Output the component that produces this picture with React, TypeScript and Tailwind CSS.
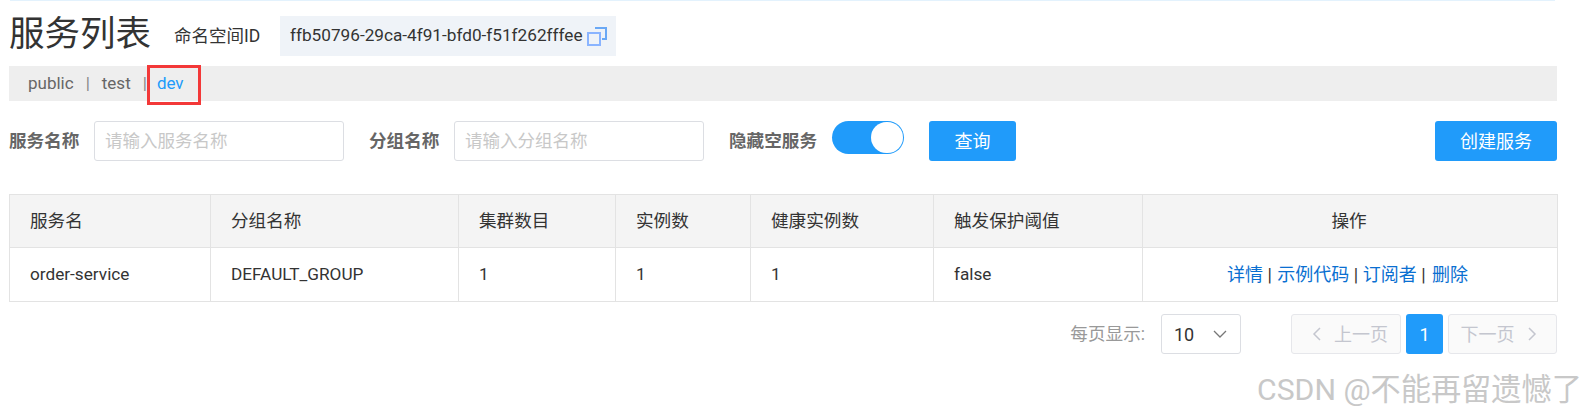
import React from "react";

const cols = ["w-[201px]", "w-[248px]", "w-[157px]", "w-[135px]", "w-[183px]", "w-[209px]", "w-[415px]"];
const heads = ["服务名", "分组名称", "集群数目", "实例数", "健康实例数", "触发保护阈值"];
const cells = ["order-service", "DEFAULT_GROUP", "1", "1", "1", "false"];

function Copy() {
  return (
    <svg width="20" height="20" viewBox="0 0 20 20" fill="none" className="ml-[4px] shrink-0">
      <rect x="1" y="7" width="12" height="12" stroke="#8ab4ff" strokeWidth="2" />
      <path d="M8 2H19V13H15" stroke="#6aa8f5" strokeWidth="2" />
    </svg>
  );
}

export default function App() {
  return (
    <div className="relative w-[1589px] h-[416px] bg-white overflow-hidden pl-[9px] pr-[32px] font-['Roboto','Noto_Sans_CJK_SC',sans-serif] text-[#333]">
      <div className="h-px ml-px mr-[2px] bg-[#e3f2fd]" />
      <div className="flex items-center h-[65px] pt-[5px]">
        <h1 className="text-[35.5px] leading-[54px] pb-[4px] font-normal text-[#333] w-[165px] whitespace-nowrap">服务列表</h1>
        <span className="text-[17.5px] w-[106px] whitespace-nowrap">命名空间ID</span>
        <div className="flex items-center h-10 w-[336px] pl-[10px] bg-[#eff3f8] text-[17.2px] whitespace-nowrap">
          ffb50796-29ca-4f91-bfd0-f51f262fffee
          <Copy />
        </div>
      </div>
      <div className="relative flex items-center h-[35px] bg-[#eeeeee] pl-[19px] text-[17px] text-[#666]">
        <span>public</span>
        <span className="mx-[12px] text-[#888]">|</span>
        <span>test</span>
        <span className="ml-[12px] mr-[10px] text-[#888]">|</span>
        <span className="text-[#209bfa]">dev</span>
        <div className="absolute left-[138px] top-[-1px] w-[54px] h-10 border-[3px] border-[#f33838]" />
      </div>
      <div className="flex items-start mt-[20px] h-10">
        <label className="w-[85px] leading-10 text-[17.6px] font-bold text-[#666] whitespace-nowrap">服务名称</label>
        <div className="w-[250px] h-10 pl-[10px] leading-[38px] text-[17.5px] text-[#c8c8c8] border border-[#dcdee3] rounded-[3px] whitespace-nowrap">请输入服务名称</div>
        <label className="w-[85px] ml-[25px] leading-10 text-[17.6px] font-bold text-[#666] whitespace-nowrap">分组名称</label>
        <div className="w-[250px] h-10 pl-[10px] leading-[38px] text-[17.5px] text-[#c8c8c8] border border-[#dcdee3] rounded-[3px] whitespace-nowrap">请输入分组名称</div>
        <label className="w-[103px] ml-[25px] leading-10 text-[17.6px] font-bold text-[#666] whitespace-nowrap">隐藏空服务</label>
        <div className="flex justify-end items-center w-[72px] h-[33px] p-[1px] rounded-full bg-[#209bfa]">
          <div className="w-[32px] h-[31px] rounded-full bg-white" />
        </div>
        <button className="w-[87px] h-10 ml-[25px] rounded-[3px] bg-[#209bfa] text-white text-[18px]">查询</button>
        <button className="w-[122px] h-10 ml-auto rounded-[3px] bg-[#209bfa] text-white text-[18px]">创建服务</button>
      </div>
      <table className="mt-[33px] w-[1548px] table-fixed border-collapse text-[17.2px]">
        <colgroup>
          {cols.map((c) => (
            <col key={c} className={c} />
          ))}
        </colgroup>
        <thead>
          <tr className="h-[53px] bg-[#f4f4f4]">
            {heads.map((h) => (
              <th key={h} className="border border-[#e3e3e3] pl-[20px] text-left font-normal text-[17.6px]">{h}</th>
            ))}
            <th className="border border-[#e3e3e3] pr-[2px] font-normal text-[17.6px]">操作</th>
          </tr>
        </thead>
        <tbody>
          <tr className="h-[54px]">
            {cells.map((c, i) => (
              <td key={i} className="border border-[#e3e3e3] pl-[20px]">{c}</td>
            ))}
            <td className="border border-[#e3e3e3] pr-[5px] text-center text-[#333] text-[18px] whitespace-nowrap">
              <a className="text-[#0a6fd1]">详情</a> <span className="mr-[1px]">|</span> <a className="text-[#0a6fd1]">示例代码</a> | <a className="text-[#0a6fd1]">订阅者</a> <span className="mr-[2px]">|</span> <a className="text-[#0a6fd1]">删除</a>
            </td>
          </tr>
        </tbody>
      </table>
      <div className="flex items-center justify-end mt-[12px] h-10">
        <span className="text-[17.6px] text-[#999] mr-[16px] whitespace-nowrap">每页显示:</span>
        <div className="flex items-center justify-between w-[80px] h-10 px-[12px] mr-[50px] border border-[#dcdee3] rounded-[3px] text-[18px]">
          10
          <svg width="16" height="16" viewBox="0 0 16 16" fill="none"><path d="M2 5l6 6 6-6" stroke="#777" strokeWidth="1.3" /></svg>
        </div>
        <div className="flex items-center justify-center gap-[12px] w-[110px] h-10 pl-[8px] border border-[#e6e7eb] rounded-[3px] bg-[#fafafa] text-[18px] text-[#c4c6cf]">
          <svg width="10" height="16" viewBox="0 0 10 16" fill="none"><path d="M8 2L2 8l6 6" stroke="#c4c6cf" strokeWidth="1.5" /></svg>
          上一页
        </div>
        <div className="flex items-center justify-center w-[37px] h-10 mx-[5px] rounded-[3px] bg-[#209bfa] text-white text-[18px]">1</div>
        <div className="flex items-center justify-center gap-[12px] w-[109px] h-10 pr-[8px] border border-[#e6e7eb] rounded-[3px] bg-[#fafafa] text-[18px] text-[#c4c6cf]">
          下一页
          <svg width="10" height="16" viewBox="0 0 10 16" fill="none"><path d="M2 2l6 6-6 6" stroke="#c4c6cf" strokeWidth="1.5" /></svg>
        </div>
      </div>
      <div className="absolute left-[1257px] top-[370px] text-[30.2px] leading-[40px] text-[#c8c8c8] whitespace-nowrap">CSDN @不能再留遗憾了</div>
    </div>
  );
}
